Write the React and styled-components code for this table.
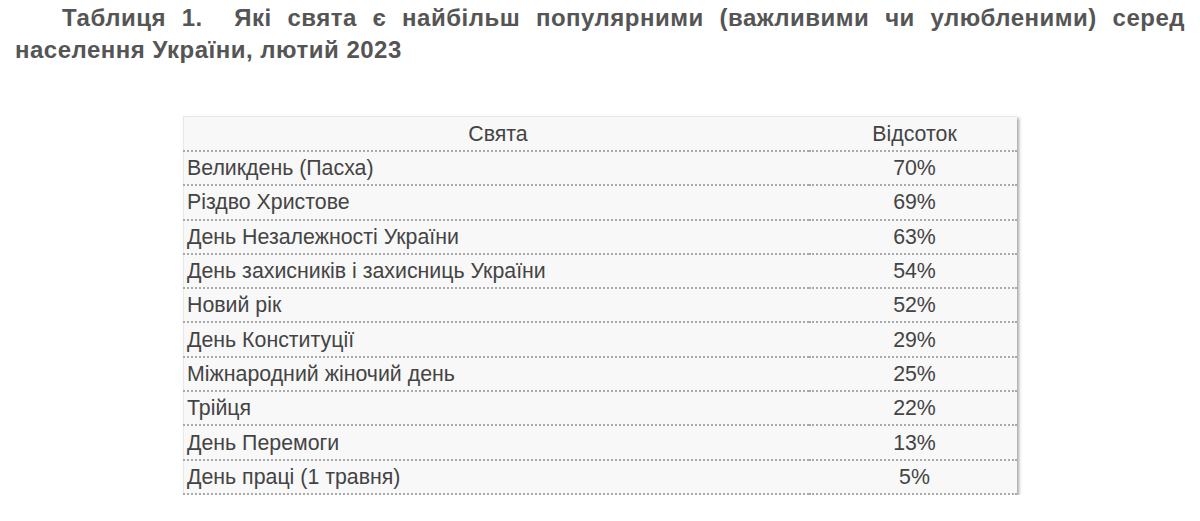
import React from "react";
import styled, { createGlobalStyle } from "styled-components";

const GlobalStyle = createGlobalStyle`
  body {
    margin: 0;
    background: #fff;
    font-family: "Liberation Sans", Arial, sans-serif;
  }
`;

const Page = styled.div`
  padding: 0 15px;
`;

const Title = styled.p`
  margin: 0;
  padding-top: 2px;
  font-size: 24px;
  font-weight: bold;
  line-height: 32px;
  letter-spacing: 0.5px;
  color: #555;
  text-align: justify;
  text-indent: 47px;
`;

const Table = styled.table`
  width: 834px;
  margin: 50px auto 0;
  border-collapse: collapse;
  background: #f8f8f8;
  box-shadow: 2px 2px 3px rgba(0, 0, 0, 0.35);
  border-top: 1px solid #e8e8e8;
  border-left: 1px solid #e8e8e8;
  font-size: 21.33px;
  color: #444;
`;

const Cell = styled.td`
  height: 32.3px;
  padding: 0 0 0 3px;
  border-bottom: 2px dotted #aaa;
  text-align: ${(p) => (p.$center ? "center" : "left")};
  width: ${(p) => p.$w || "auto"};
  vertical-align: middle;
  line-height: 24px;
`;

const Head = styled(Cell).attrs({ as: "th" })`
  height: 33px;
  font-weight: normal;
  text-align: center;
`;

const rows = [
  ["Великдень (Пасха)", "70%"],
  ["Різдво Христове", "69%"],
  ["День Незалежності України", "63%"],
  ["День захисників і захисниць України", "54%"],
  ["Новий рік", "52%"],
  ["День Конституції", "29%"],
  ["Міжнародний жіночий день", "25%"],
  ["Трійця", "22%"],
  ["День Перемоги", "13%"],
  ["День праці (1 травня)", "5%"],
];

export default function App() {
  return (
    <Page>
      <GlobalStyle />
      <Title>
        Таблиця 1.&nbsp; Які свята є найбільш популярними (важливими чи
        улюбленими) серед населення України, лютий 2023
      </Title>
      <Table>
        <thead>
          <tr>
            <Head $w="622px">Свята</Head>
            <Head>Відсоток</Head>
          </tr>
        </thead>
        <tbody>
          {rows.map(([name, pct]) => (
            <tr key={name}>
              <Cell>{name}</Cell>
              <Cell $center>{pct}</Cell>
            </tr>
          ))}
        </tbody>
      </Table>
    </Page>
  );
}
